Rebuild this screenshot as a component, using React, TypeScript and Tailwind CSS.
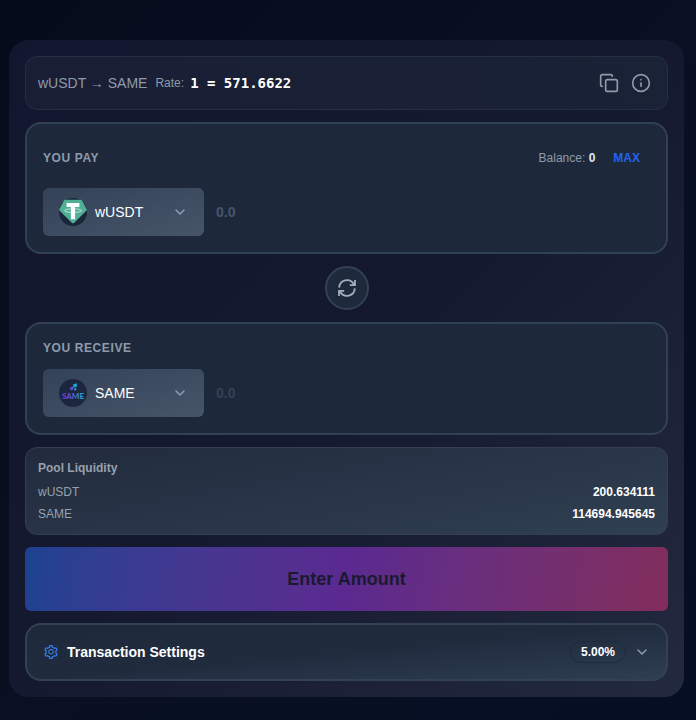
import React, { useState } from 'react';
import { ChevronDown, Copy, Info } from 'lucide-react';
import { AiOutlineSetting } from 'react-icons/ai';

const TetherLogo = () => (
  <svg viewBox="0 0 28 28" className="h-7 w-7 shrink-0" aria-hidden="true">
    <circle cx="14" cy="14" r="14" fill="#1b2638" />
    <path d="M6.2 1.8h15.6q.8 0 1.2.7l4.6 8.4q.5 1-.3 1.8L15 24.9q-1 .9-2 0L.7 12.7q-.8-.8-.3-1.8L5 2.5q.4-.7 1.2-.7z" fill="#50af95" />
    <ellipse cx="14" cy="12.6" rx="8.6" ry="1.8" fill="none" stroke="#d8efe8" strokeWidth="0.8" />
    <path d="M7.6 5h12.8v3.9h-4.3v12.3h-4.2V8.9H7.6z" fill="#fff" />
  </svg>
);

const SameLogo = () => (
  <svg viewBox="0 0 28 28" className="h-7 w-7 shrink-0" aria-hidden="true">
    <defs>
      <linearGradient id="same" x1="0" y1="0" x2="1" y2="0">
        <stop offset="0" stopColor="#7a2fd0" />
        <stop offset="0.45" stopColor="#5b56cc" />
        <stop offset="1" stopColor="#1cb4d4" />
      </linearGradient>
    </defs>
    <circle cx="14" cy="14" r="14" fill="#1c273d" />
    <path d="M14.2 5.2 18 4.2 17.8 8 14.6 8.2z" fill="#1fa8dd" />
    <path d="M12.4 9.8 15.8 6.4" stroke="#3d7ad9" strokeWidth="1.4" />
    <circle cx="12.6" cy="9.6" r="1.7" fill="#5a50d8" />
    <circle cx="16.2" cy="10.2" r="1.2" fill="#2d8fd0" />
    <text x="14" y="19.6" textAnchor="middle" fontSize="8" fontWeight="900" fontFamily="Lato, sans-serif" fill="url(#same)">
      SAME
    </text>
  </svg>
);

interface TokenRowProps {
  id: string;
  symbol: string;
  logo: React.ReactNode;
  amount: string;
  onChange?: (value: string) => void;
  inputClass: string;
}

const TokenRow = ({ id, symbol, logo, amount, onChange, inputClass }: TokenRowProps) => (
  <div className="flex items-center gap-3">
    <button
      type="button"
      className="flex h-12 w-[161px] shrink-0 items-center gap-2 rounded-md bg-linear-to-br from-[#344258] to-[#475569] px-4 text-sm text-white"
    >
      {logo}
      <span className="flex-1 text-left">{symbol}</span>
      <ChevronDown className="h-4 w-4 text-slate-400" strokeWidth={2} />
    </button>
    <input
      id={id}
      type="text"
      inputMode="decimal"
      placeholder="0.0"
      value={amount}
      readOnly={!onChange}
      onChange={(e) => onChange?.(e.target.value)}
      className={inputClass}
    />
  </div>
);

const pool = [
  { symbol: 'wUSDT', value: '200.634111' },
  { symbol: 'SAME', value: '114694.945645' },
];

const App = () => {
  const [amount, setAmount] = useState('');

  return (
    <div className="min-h-screen bg-linear-to-br from-[#060b1c] via-[#091022] to-[#060e24] pt-10 pr-3 pb-6 pl-[9px] font-['Liberation_Sans',Arial,sans-serif] text-[#8f9aab]">
      <main className="flex flex-col gap-3 rounded-[20px] bg-linear-to-br from-[#12172f] via-[#14192f] to-[#23293e] p-4">
        {/* Rate bar */}
        <div className="flex h-[54px] items-center justify-between rounded-xl border border-[#242f42] bg-linear-to-r from-[#191e35] to-[#1a2236] px-3">
          <div className="flex items-center gap-2">
            <span className="text-sm">wUSDT → SAME</span>
            <span className="flex items-center gap-1.5 text-xs">
              Rate:
              <span className="font-['DejaVu_Sans_Mono',monospace] text-sm font-bold text-white">1 = 571.6622</span>
            </span>
          </div>
          <div className="flex items-center gap-3 pr-1">
            <button type="button" aria-label="Copy">
              <Copy className="h-5 w-5" strokeWidth={2} />
            </button>
            <button type="button" aria-label="Info">
              <Info className="h-5 w-5" strokeWidth={2} />
            </button>
          </div>
        </div>

        {/* You pay */}
        <section className="flex flex-col gap-3 rounded-2xl border-2 border-[#314153] bg-[#1d293b] p-4">
          <div className="flex h-9 items-center justify-between text-xs">
            <label htmlFor="pay" className="font-bold tracking-wider">
              YOU PAY
            </label>
            <div className="flex items-center gap-2">
              <span>
                Balance: <b className="text-slate-200">0</b>
              </span>
              <button type="button" className="h-9 px-2.5 font-bold text-[#2563eb]">
                MAX
              </button>
            </div>
          </div>
          <TokenRow
            id="pay"
            symbol="wUSDT"
            logo={<TetherLogo />}
            amount={amount}
            onChange={setAmount}
            inputClass="min-w-0 flex-1 bg-transparent text-sm font-bold text-white outline-none placeholder:text-[#475569]"
          />
        </section>

        {/* Switch direction */}
        <button
          type="button"
          aria-label="Switch tokens"
          className="flex h-11 w-11 items-center justify-center self-center rounded-full border-2 border-[#334155] bg-[#1e293b] text-[#a3aebd]"
        >
          <svg viewBox="0 0 20 20" className="h-5 w-5" fill="none" stroke="currentColor" strokeWidth="1.8" aria-hidden="true">
            <path d="M2.2 9.6A7.8 7.8 0 0 1 16.8 6.2M17.8 10.4A7.8 7.8 0 0 1 3.2 13.8" />
            <path d="M18 2v5.2h-5.2M2 18v-5.2h5.2" />
            <path d="M17.6 4.2v2.6h-2.6zM2.4 15.8v-2.6h2.6z" fill="currentColor" stroke="none" />
          </svg>
        </button>

        {/* You receive */}
        <section className="flex flex-col gap-3 rounded-2xl border-2 border-[#314153] bg-[#1d293b] p-4">
          <label htmlFor="receive" className="text-xs leading-[17px] font-bold tracking-wider">
            YOU RECEIVE
          </label>
          <TokenRow
            id="receive"
            symbol="SAME"
            logo={<SameLogo />}
            amount=""
            inputClass="min-w-0 flex-1 bg-transparent text-sm font-bold text-white outline-none placeholder:text-[#334155]"
          />
        </section>

        {/* Pool liquidity */}
        <section className="rounded-xl border border-[#324051] bg-linear-170 from-[#212b3d] to-[#303f52] p-3 text-xs text-[#98a1ab]">
          <h2 className="mb-2 font-bold">Pool Liquidity</h2>
          <dl className="flex flex-col gap-1.5">
            {pool.map((item) => (
              <div key={item.symbol} className="flex justify-between">
                <dt>{item.symbol}</dt>
                <dd className="font-bold text-white">{item.value}</dd>
              </div>
            ))}
          </dl>
        </section>

        <button
          type="button"
          className="h-16 rounded-md bg-linear-100 from-[#1c4291] via-[#5b2990] to-[#832d5b] text-lg font-bold text-[#1a1a2e]"
        >
          Enter Amount
        </button>

        {/* Settings */}
        <button
          type="button"
          className="flex h-[58px] items-center gap-2 rounded-2xl border-2 border-[#334155] bg-linear-175 from-[#1e293b] via-[#202c3e] to-[#2f3e52] px-4 text-sm font-bold text-white"
        >
          <AiOutlineSetting className="h-4 w-4 text-[#3b82f6]" />
          <span className="flex-1 text-left">Transaction Settings</span>
          <span className="rounded-xl border border-[#1f2a3c] px-2.5 py-0.5 text-xs">5.00%</span>
          <ChevronDown className="h-4 w-4 text-slate-400" strokeWidth={2} />
        </button>
      </main>
    </div>
  );
};

export default App;
